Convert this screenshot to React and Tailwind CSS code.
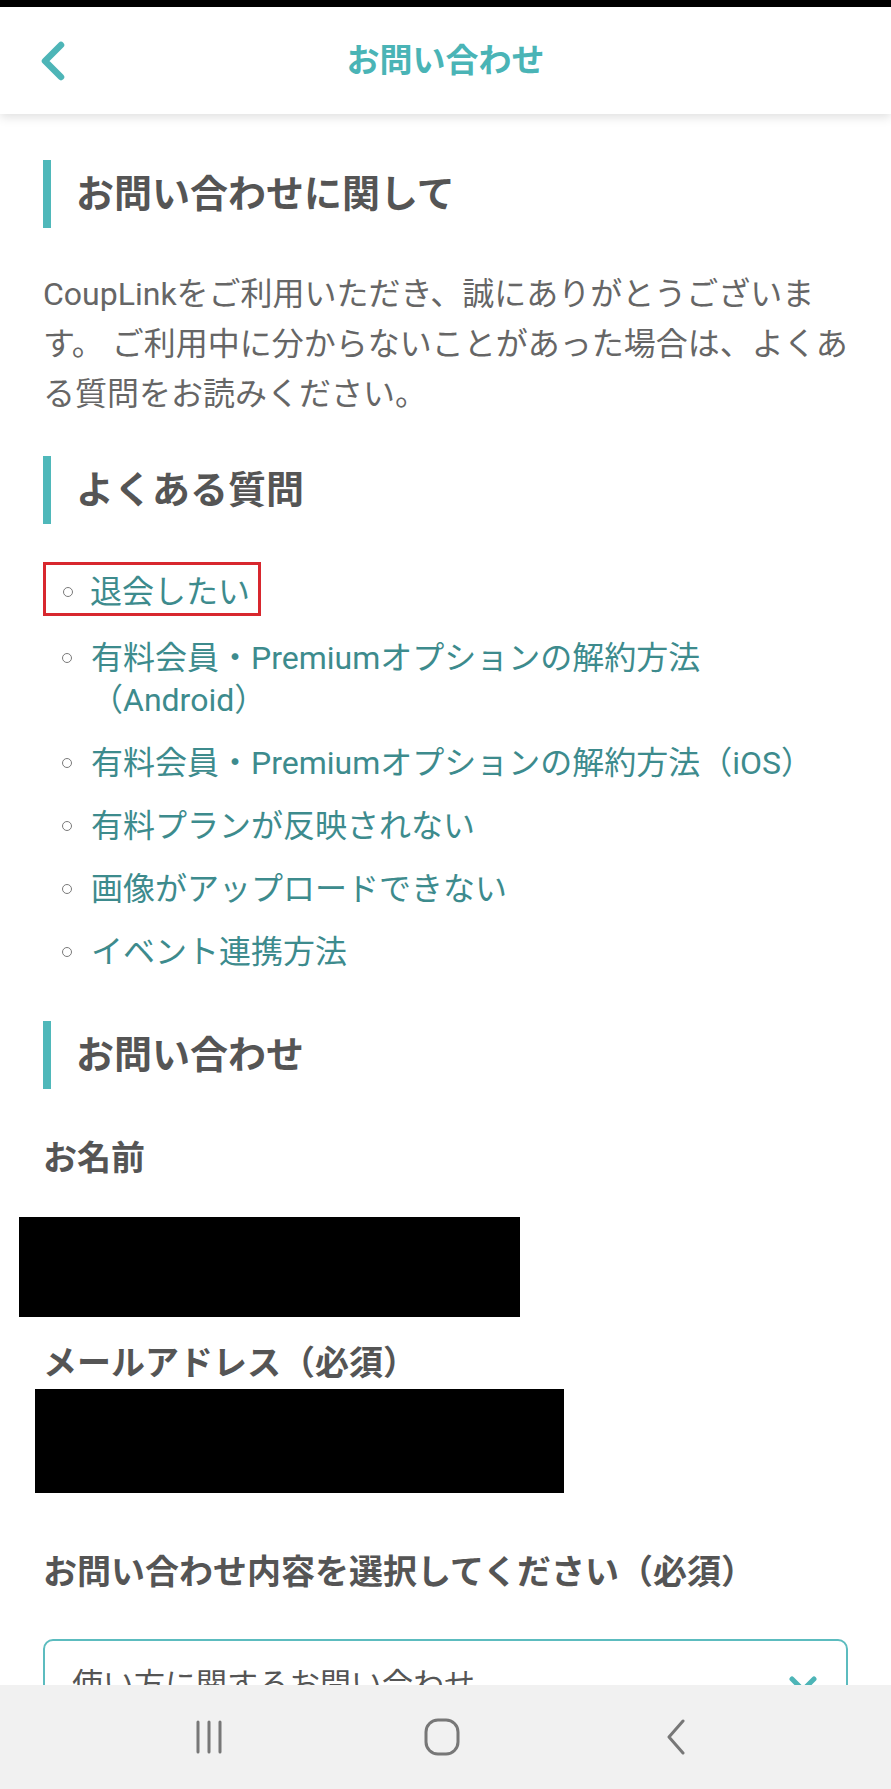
import React from 'react';

const faqs = [
  { id: 1, label: '退会したい', boxed: true },
  { id: 2, label: ['有料会員・Premiumオプションの解約方法', '（Android）'] },
  { id: 3, label: '有料会員・Premiumオプションの解約方法（iOS）' },
  { id: 4, label: '有料プランが反映されない' },
  { id: 5, label: '画像がアップロードできない' },
  { id: 6, label: 'イベント連携方法' },
];

function SectionTitle({ children, className = '' }) {
  return (
    <h2 className={`flex items-center h-[68px] border-l-[8px] border-[#4fb8ba] pl-[25px] text-[38px] font-bold text-[#555555] leading-none ${className}`}>
      {children}
    </h2>
  );
}

function Bullet({ width }) {
  return (
    <span className={`${width} shrink-0 h-[42px] flex items-center justify-center`}>
      <span className="w-[10px] h-[10px] rounded-full border-[1.5px] border-[#7a7a7a]" />
    </span>
  );
}

function FaqItem({ item }) {
  const text = Array.isArray(item.label) ? (
    <span>
      {item.label[0]}
      <br />
      {item.label[1]}
    </span>
  ) : (
    <span>{item.label}</span>
  );

  if (item.boxed) {
    return (
      <li className="flex">
        <div className="flex w-[218px] border-[3.5px] border-[#d8272e] pt-[6px] -mt-[9px]">
          <Bullet width="w-[44px]" />
          <a className="text-[#3d8b8d] cursor-pointer">{text}</a>
        </div>
      </li>
    );
  }

  return (
    <li className="flex">
      <Bullet width="w-[48px]" />
      <a className="text-[#3d8b8d] cursor-pointer">{text}</a>
    </li>
  );
}

export default function App() {
  return (
    <div
      className="w-[891px] h-[1789px] flex flex-col overflow-hidden bg-white"
      style={{ fontFamily: 'Roboto, "Noto Sans CJK JP", sans-serif' }}
    >
      {/* status bar strip */}
      <div className="h-[7px] bg-black shrink-0" />

      {/* header */}
      <header className="h-[107px] shrink-0 grid grid-cols-[1fr_auto_1fr] items-center bg-white shadow-[0_3px_10px_rgba(0,0,0,0.13)] z-10">
        <div className="pl-[38px] flex items-center">
          <svg width="30" height="40" viewBox="0 0 30 40">
            <polyline points="23,4 7,20 23,36" fill="none" stroke="#4db5b7" strokeWidth="6.5" strokeLinecap="round" strokeLinejoin="round" />
          </svg>
        </div>
        <h1 className="text-[33px] font-bold text-[#4ab4b6] leading-none">お問い合わせ</h1>
        <div />
      </header>

      {/* content */}
      <main className="flex-1 overflow-hidden px-[43px] pt-[46px]">
        <SectionTitle>お問い合わせに関して</SectionTitle>

        <p className="mt-[41px] text-[32px] leading-[50px] text-[#666666] whitespace-nowrap">
          CoupLinkをご利用いただき、誠にありがとうございま
          <br />
          す。 ご利用中に分からないことがあった場合は、よくあ
          <br />
          る質問をお読みください。
        </p>

        <SectionTitle className="mt-[37px]">よくある質問</SectionTitle>

        <ul className="mt-[47px] flex flex-col gap-[21px] text-[32px] leading-[42px] whitespace-nowrap">
          {faqs.map(item => (
            <FaqItem key={item.id} item={item} />
          ))}
        </ul>

        <SectionTitle className="mt-[48px]">お問い合わせ</SectionTitle>

        <div className="mt-[48px] text-[34px] font-bold leading-[42px] text-[#555555]">お名前</div>
        <div className="mt-[38px] -ml-[24px] w-[501px] h-[100px] bg-black" />

        <div className="mt-[25px] text-[34px] font-bold leading-[42px] text-[#555555]">メールアドレス（必須）</div>
        <div className="mt-[5px] -ml-[8px] w-[529px] h-[104px] bg-black" />

        <div className="mt-[58px] text-[34px] font-bold leading-[42px] text-[#555555] whitespace-nowrap">
          お問い合わせ内容を選択してください（必須）
        </div>

        <div className="mt-[46px] h-[92px] rounded-[10px] border-[2px] border-[#5cbcbf] flex items-center justify-between pl-[27px] pr-[28px]">
          <span className="text-[31px] text-[#555555]">使い方に関するお問い合わせ</span>
          <svg width="30" height="20" viewBox="0 0 30 20">
            <polyline points="4,4 15,15 26,4" fill="none" stroke="#4db5b7" strokeWidth="5" strokeLinecap="round" strokeLinejoin="round" />
          </svg>
        </div>
      </main>

      {/* android nav bar */}
      <nav className="h-[104px] shrink-0 bg-[#f1f1f1] grid grid-cols-3 items-center px-[100px]">
        <div className="flex justify-center">
          <svg width="32" height="34" viewBox="0 0 32 34" className="-ml-[12px]">
            <line x1="5" y1="2" x2="5" y2="32" stroke="#777" strokeWidth="3" strokeLinecap="round" />
            <line x1="16" y1="2" x2="16" y2="32" stroke="#777" strokeWidth="3" strokeLinecap="round" />
            <line x1="27" y1="2" x2="27" y2="32" stroke="#777" strokeWidth="3" strokeLinecap="round" />
          </svg>
        </div>
        <div className="flex justify-center">
          <svg width="38" height="38" viewBox="0 0 38 38" className="-ml-[6px]">
            <rect x="3" y="2" width="32" height="34" rx="12" fill="none" stroke="#777" strokeWidth="3" />
          </svg>
        </div>
        <div className="flex justify-center">
          <svg width="24" height="36" viewBox="0 0 24 36">
            <polyline points="19,2 5,18 19,34" fill="none" stroke="#777" strokeWidth="3" strokeLinecap="round" strokeLinejoin="round" />
          </svg>
        </div>
      </nav>
    </div>
  );
}
